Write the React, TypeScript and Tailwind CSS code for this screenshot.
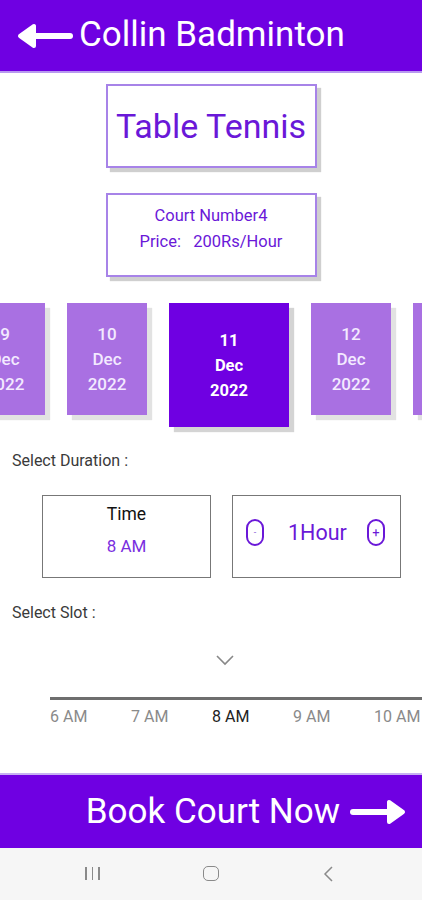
import React from "react";

const font = { fontFamily: "Roboto, 'Noto Sans', sans-serif" };

function LeftArrow() {
  return (
    <svg width="56" height="26" viewBox="0 0 56 26">
      <line x1="14" y1="13" x2="53" y2="13" stroke="white" strokeWidth="6" strokeLinecap="round" />
      <path d="M3 13 L17 3 L17 23 Z" fill="white" stroke="white" strokeWidth="4" strokeLinejoin="round" />
    </svg>
  );
}

function RightArrow() {
  return (
    <svg width="56" height="26" viewBox="0 0 56 26">
      <line x1="3" y1="13" x2="42" y2="13" stroke="white" strokeWidth="6" strokeLinecap="round" />
      <path d="M53 13 L39 3 L39 23 Z" fill="white" stroke="white" strokeWidth="4" strokeLinejoin="round" />
    </svg>
  );
}

type Card = { d: string; sel?: boolean };

export default function App() {
  const cards: Card[] = [{ d: "9" }, { d: "10" }, { d: "11", sel: true }, { d: "12" }, { d: "13" }];
  const slots = ["6 AM", "7 AM", "8 AM", "9 AM", "10 AM"];
  return (
    <div className="w-[422px] h-[900px] bg-white flex flex-col overflow-hidden" style={font}>
      <div className="h-[73px] bg-[#6f00e2] border-b-2 border-[#b89af0] flex items-center pl-[17px] shrink-0">
        <LeftArrow />
        <span className="text-white text-[35px] leading-none ml-[6px] mb-[2px]">Collin Badminton</span>
      </div>

      <div className="flex flex-col items-center">
        <div className="mt-[11px] w-[211px] h-[84px] border-2 border-[#a783e8] shadow-[4px_4px_1px_#cfcfcf] flex items-center justify-center">
          <span className="text-[34px] text-[#6a18d8] leading-none">Table Tennis</span>
        </div>
        <div className="mt-[25px] w-[211px] h-[84px] border-2 border-[#a783e8] shadow-[4px_4px_1px_#cfcfcf] flex flex-col items-center justify-center gap-[6px] pb-[12px]">
          <span className="text-[16.5px] text-[#6a18d8] leading-[20px]">Court Number4</span>
          <span className="text-[16.5px] text-[#6a18d8] leading-[20px] whitespace-pre">Price:   200Rs/Hour</span>
        </div>
      </div>

      <div className="mt-[26px] flex items-start gap-[22px] ml-[-35px]">
        {cards.map((c) =>
          c.sel ? (
            <div key={c.d} className="w-[120px] h-[124px] shrink-0 bg-[#6f00e2] shadow-[5px_5px_1px_#d4d4d4] flex flex-col items-center justify-center text-white font-bold text-[16.5px] leading-[25px]">
              <span>{c.d}</span>
              <span>Dec</span>
              <span>2022</span>
            </div>
          ) : (
            <div key={c.d} className="w-[80px] h-[112px] shrink-0 bg-[#a970e2] shadow-[5px_5px_1px_#e2e2e2] flex flex-col items-center justify-center text-[#f3eaff] font-medium text-[17px] leading-[25px]">
              <span>{c.d}</span>
              <span>Dec</span>
              <span>2022</span>
            </div>
          )
        )}
      </div>

      <div className="mt-[24px] ml-[12px] text-[16px] leading-[20px] text-[#3a3a3a]">Select Duration :</div>

      <div className="mt-[24px] flex ml-[42px] gap-[21px]">
        <div className="w-[169px] h-[83px] border border-[#777] flex flex-col items-center pt-[8px]">
          <span className="text-[17.5px] leading-[20px] text-[#111]">Time</span>
          <span className="mt-[12px] text-[17px] leading-[20px] text-[#7a2fe0]">8 AM</span>
        </div>
        <div className="w-[169px] h-[83px] border border-[#777] flex items-center pl-[13px] pb-[8px]">
          <div className="w-[18px] h-[27px] rounded-[9px] border-2 border-[#6a18d8] flex items-center justify-center text-[9px] text-[#8a5fd8]">-</div>
          <span className="ml-[24px] text-[21.5px] text-[#6a18d8] leading-none">1Hour</span>
          <div className="ml-[20px] w-[18px] h-[27px] rounded-[9px] border-2 border-[#6a18d8] flex items-center justify-center text-[13px] text-[#6a18d8] leading-none">+</div>
        </div>
      </div>

      <div className="mt-[25px] ml-[12px] text-[16px] leading-[20px] text-[#3a3a3a]">Select Slot :</div>

      <div className="mt-[31px] ml-[215px]">
        <svg width="20" height="12" viewBox="0 0 20 12">
          <path d="M2 2 L10 10 L18 2" fill="none" stroke="#888" strokeWidth="1.6" />
        </svg>
      </div>

      <div className="mt-[31px] ml-[50px] h-[3px] bg-[#6e6e6e]" />
      <div className="mt-[8px] ml-[50px] flex">
        {slots.map((s) => (
          <span
            key={s}
            className={
              s === "8 AM"
                ? "w-[81px] shrink-0 text-[16px] leading-[18px] text-[#222]"
                : "w-[81px] shrink-0 text-[16px] leading-[18px] text-[#8a8a8a]"
            }
          >
            {s}
          </span>
        ))}
      </div>

      <div className="mt-auto h-[75px] bg-[#6f00e2] border-t-2 border-[#c7b0f2] flex items-center justify-end pr-[16px] shrink-0">
        <span className="text-white text-[35px] leading-none mr-[10px] mb-[1px]">Book Court Now</span>
        <RightArrow />
      </div>
      <div className="h-[52px] bg-[#f6f6f6] flex items-center shrink-0 relative">
        <div className="absolute left-[85px] top-[19px] flex gap-[5px]">
          <div className="w-[1.5px] h-[13px] bg-[#8a8a8a]" />
          <div className="w-[1.5px] h-[13px] bg-[#8a8a8a]" />
          <div className="w-[1.5px] h-[13px] bg-[#8a8a8a]" />
        </div>
        <div className="absolute left-[203px] top-[18px] w-[16px] h-[15px] rounded-[5px] border-[1.5px] border-[#8a8a8a]" />
        <svg className="absolute left-[322px] top-[17px]" width="12" height="18" viewBox="0 0 12 18">
          <path d="M10 2 L3 9 L10 16" fill="none" stroke="#8a8a8a" strokeWidth="1.5" />
        </svg>
      </div>
    </div>
  );
}
